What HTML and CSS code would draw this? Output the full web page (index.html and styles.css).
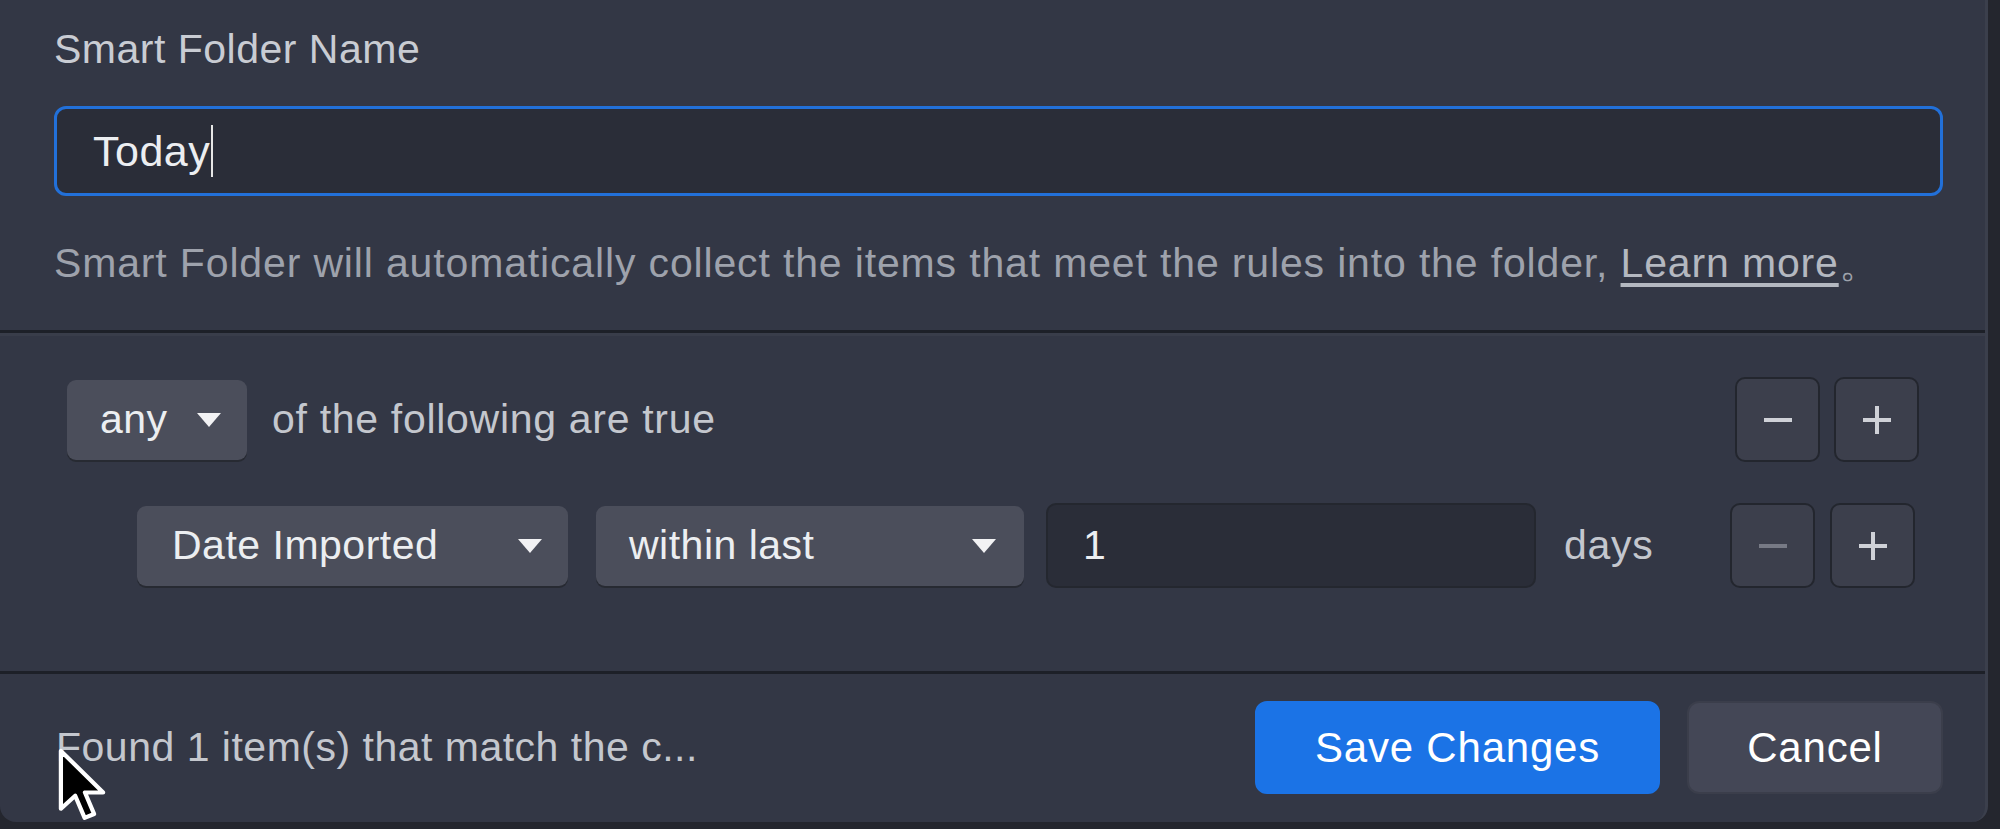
FILE: index.html
```html
<!DOCTYPE html>
<html lang="en">
<head>
    <meta charset="UTF-8">
    <title>Smart Folder</title>
    <link rel="stylesheet" href="styles.css">
</head>
<body>
    <div class="dialog">
        <section class="name-section">
            <label class="field-label">Smart Folder Name</label>
            <div class="name-input">Today<span class="caret"></span></div>
            <p class="hint">Smart Folder will automatically collect the items that meet the rules into the folder, <a href="#">Learn more</a>。</p>
        </section>

        <section class="rules">
            <div class="rule-row">
                <div class="select select-any">any <span class="arrow"></span></div>
                <span class="rule-text">of the following are true</span>
                <div class="stepper">
                    <button class="step-btn"><span class="minus"></span></button>
                    <button class="step-btn"><span class="plus"></span></button>
                </div>
            </div>
            <div class="rule-row rule-row-sub">
                <div class="select select-field">Date Imported <span class="arrow"></span></div>
                <div class="select select-op">within last <span class="arrow"></span></div>
                <div class="value-input">1</div>
                <span class="rule-text unit">days</span>
                <div class="stepper">
                    <button class="step-btn" disabled><span class="minus"></span></button>
                    <button class="step-btn"><span class="plus"></span></button>
                </div>
            </div>
        </section>

        <footer class="footer">
            <span class="status">Found 1 item(s) that match the c...</span>
            <div class="actions">
                <button class="btn btn-primary">Save Changes</button>
                <button class="btn">Cancel</button>
            </div>
        </footer>

        <!-- mouse pointer -->
        <svg class="cursor" width="52" height="78" viewBox="0 0 16 24">
            <path d="M1.2 1.2 L1.2 19 L5.6 15 L8.5 21.8 L11.4 20.6 L8.6 14 L14.2 14 Z" fill="#000" stroke="#fff" stroke-width="1.3" stroke-linejoin="round"/>
        </svg>
    </div>
</body>
</html>
```

FILE: styles.css
```css
body {
    margin: 0;
    background-color: #24262e;
    font-family: "Liberation Sans", Arial, sans-serif;
    font-size: 41px;
    letter-spacing: 0.5px;
}
.dialog {
    position: relative;
    width: 1988px;
    height: 822px;
    background-color: #333745;
    border-right: 3px solid #3b3f4c;
    border-radius: 0 0 16px 16px;
    box-sizing: border-box;
    overflow: hidden;
}
.name-section {
    padding: 25px 42px 43px 54px;
}
.field-label {
    display: block;
    line-height: 48px;
    color: #c9ccd3;
}
.name-input {
    margin-top: 33px;
    height: 90px;
    box-sizing: border-box;
    border: 3px solid #2270d9;
    border-radius: 12px;
    background-color: #2a2d38;
    padding-left: 36px;
    display: flex;
    align-items: center;
    color: #eceef1;
    font-size: 43px;
}
.caret {
    width: 2px;
    height: 52px;
    margin-left: 1px;
    background-color: #e6e6e6;
}
.hint {
    margin: 43px 0 0;
    line-height: 48px;
    color: #9ea2ac;
    white-space: nowrap;
    letter-spacing: 0.85px;
}
.hint a {
    color: #b4b8c0;
    text-decoration: underline;
    text-underline-offset: 6px;
}
.rules {
    border-top: 3px solid #1d2028;
    box-shadow: inset 0 3px 0 #393d4a;
    padding: 44px 0 83px;
}
.rule-row {
    display: flex;
    align-items: center;
    height: 85px;
    padding: 0 66px 0 67px;
}
.rule-row-sub {
    margin-top: 41px;
    padding: 0 70px 0 137px;
}
.select {
    height: 80px;
    box-sizing: border-box;
    display: flex;
    align-items: center;
    justify-content: space-between;
    background-color: #4b4e5b;
    border-radius: 9px;
    box-shadow: 0 2px 0 #272a32;
    color: #eceef1;
    padding: 0 26px 0 33px;
}
.select-any {
    width: 180px;
}
.select-field {
    width: 431px;
    padding-left: 35px;
}
.select-op {
    width: 428px;
    margin-left: 28px;
    padding-right: 28px;
}
.arrow {
    width: 0;
    height: 0;
    border-left: 12px solid transparent;
    border-right: 12px solid transparent;
    border-top: 14px solid #f2f2f4;
}
.rule-text {
    margin-left: 25px;
    color: #c4c7ce;
    letter-spacing: 0.7px;
}
.value-input {
    width: 490px;
    height: 85px;
    box-sizing: border-box;
    margin-left: 22px;
    border: 2px solid #24272f;
    border-radius: 10px;
    background-color: #2a2d38;
    padding-left: 35px;
    display: flex;
    align-items: center;
    color: #eceef1;
}
.unit {
    margin-left: 28px;
}
.stepper {
    margin-left: auto;
    display: flex;
    gap: 14px;
}
.rule-row-sub .stepper {
    gap: 15px;
}
.step-btn {
    width: 85px;
    height: 85px;
    border: 2px solid #23262e;
    border-radius: 10px;
    background-color: #3c3f4c;
    padding: 0;
    display: flex;
    align-items: center;
    justify-content: center;
    color: #cfd1d7;
}
.step-btn:disabled {
    color: #777a85;
}
.minus, .plus {
    position: relative;
    width: 28px;
    height: 4px;
    background-color: currentColor;
}
.plus::after {
    content: "";
    position: absolute;
    left: 12px;
    top: -12px;
    width: 4px;
    height: 28px;
    background-color: currentColor;
}
.footer {
    border-top: 3px solid #1d2028;
    height: 147px;
    display: flex;
    align-items: center;
    padding: 0 42px 0 56px;
}
.status {
    color: #c4c7ce;
}
.actions {
    margin-left: auto;
    display: flex;
    gap: 27px;
}
.btn {
    height: 93px;
    width: 256px;
    border: 2px solid #3b3e4b;
    border-radius: 12px;
    background-color: #444756;
    color: #ffffff;
    font-family: inherit;
    font-size: 42px;
    letter-spacing: 0.8px;
}
.btn-primary {
    width: 405px;
    border-color: #1b73e6;
    background-color: #1b73e6;
}
.cursor {
    position: absolute;
    left: 57px;
    top: 747px;
}
```
